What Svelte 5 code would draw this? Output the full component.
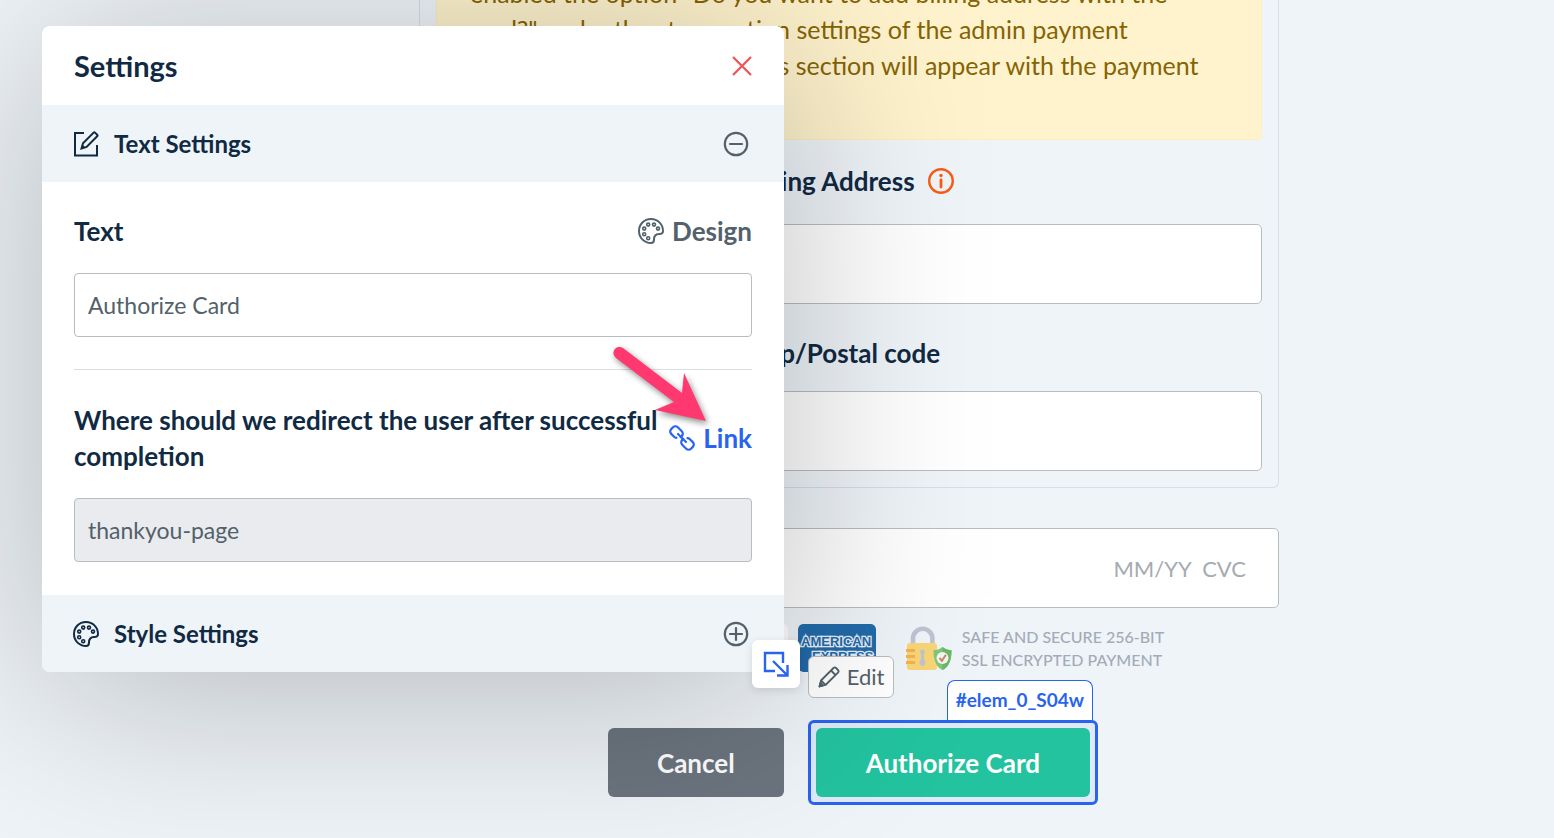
<script lang="ts">
  let buttonText = $state("Authorize Card");
  let redirectPage = $state("thankyou-page");
  let address = $state("");
  let postalCode = $state("");

  const cards = ["VISA", "MASTER", "DISCOVER"];
</script>

{#snippet palette()}
  <svg class="icon" viewBox="0 0 26 26" fill="none" stroke="currentColor" stroke-width="2" aria-hidden="true">
    <path d="M13 1C6 1 1 6.300 1 13c0 7 5.500 12 12 12 2.200 0 3-1.300 3-3.500 0-4 1.500-5.500 5-5.500 2.500 0 4-.8 4-3C25 6 19.500 1 13 1Z" />
    <g stroke-width="1.600">
      <circle cx="10.200" cy="6.600" r="1.500" />
      <circle cx="16" cy="6.600" r="1.500" />
      <circle cx="20" cy="10.600" r="1.500" />
      <circle cx="6.200" cy="10.600" r="1.500" />
      <circle cx="6.200" cy="16.200" r="1.500" />
      <circle cx="10.200" cy="20.200" r="1.500" />
    </g>
  </svg>
{/snippet}

<main class="page">
  <form class="checkout" onsubmit={(e) => e.preventDefault()}>
    <div class="address">
      <p class="alert">
        enabled the option "Do you want to add billing address with the<br />
        card?" under the store option settings of the admin payment<br />
        methods. When enabled, this section will appear with the payment<br />
        form.
      </p>
      <div class="field lead">
        <label for="address">
          Billing Address
          <svg class="info" viewBox="0 0 26 26" fill="none" stroke="currentColor" stroke-width="2.400" aria-hidden="true">
            <circle cx="13" cy="13" r="11.800" />
            <path d="M13 12v7" stroke-width="2.800" stroke-linecap="round" />
            <circle cx="13" cy="7.500" r="1.700" fill="currentColor" stroke="none" />
          </svg>
        </label>
        <input id="address" bind:value={address} />
      </div>
      <div class="field">
        <label for="postal">Zip/Postal code</label>
        <input id="postal" bind:value={postalCode} />
      </div>
    </div>

    <input class="card-number" aria-label="Card details" placeholder="MM/YY  CVC" />

    <div class="trust">
      {#each cards as card}
        <span class="brand">{card}</span>
      {/each}
      <svg class="amex" viewBox="0 0 78 48" role="img" aria-label="American Express">
        <rect width="78" height="48" rx="5" fill="#226bab" />
        <g font-family="Liberation Sans, sans-serif" font-size="13" font-weight="700" fill="#226bab" stroke="#e8eef4" stroke-width="2.600" paint-order="stroke">
          <text x="3" y="22">AMERICAN</text>
          <text x="14" y="37">EXPRESS</text>
        </g>
      </svg>
      <svg class="lock" viewBox="0 0 46 48" aria-hidden="true">
        <path d="M7 22V14.500a9.700 9.700 0 0 1 19.400 0V22" fill="none" stroke="#bfc4d2" stroke-width="4.600" />
        <rect x="1" y="19" width="30" height="27" rx="3" fill="#f7d577" />
        <path d="M0 25h9v3H0zM0 31h9v3H0zM0 37h9v3H0z" fill="#f6b04e" />
        <circle cx="16.500" cy="28" r="2.400" fill="#bfc4d2" />
        <path d="M15 28h3v7l1.400 3a3 3 0 1 1-5.800 0L15 35z" fill="#bfc4d2" />
        <path d="M36.500 23c3 2.300 6 3.200 9 3.300C45.500 36 43 43 36.500 46 30 43 27.500 36 27.500 26.300c3-.1 6-1 9-3.300Z" fill="#7fc779" />
        <path d="M36.500 23c3 2.300 6 3.200 9 3.300C45.500 36 43 43 36.500 46Z" fill="#6bb767" />
        <circle cx="36.500" cy="34" r="6" fill="#f4f6f5" />
        <path d="m33.500 34 2.400 2.800 4-6" fill="none" stroke="#c98b62" stroke-width="2" />
      </svg>
      <p class="secure">SAFE AND SECURE 256-BIT<br />SSL ENCRYPTED PAYMENT</p>
    </div>

    <div class="actions">
      <button class="btn cancel" type="button">Cancel</button>
      <div class="selected">
        <button class="edit" type="button">
          <svg viewBox="0 0 22 22" fill="none" stroke="currentColor" stroke-width="1.800" stroke-linejoin="round" aria-hidden="true">
            <path d="M1.500 20.500 3 14.500 15.500 2a1.800 1.800 0 0 1 2.500 0l2 2a1.800 1.800 0 0 1 0 2.500L7.500 19l-6 1.500Z" />
            <path d="m13 4.500 4.500 4.500M3 14.500 7.500 19" />
            <path d="m1.500 20.500 1-3.500 2.500 2.500Z" fill="currentColor" />
          </svg>
          Edit
        </button>
        <span class="tag">#elem_0_S04w</span>
        <button class="btn authorize" type="submit">{buttonText}</button>
      </div>
    </div>
  </form>

  <section class="settings" aria-label="Settings">
    <header>
      <h2>Settings</h2>
      <button class="plain close" type="button" aria-label="Close">
        <svg viewBox="0 0 20 20" stroke="currentColor" stroke-width="2.200" aria-hidden="true">
          <path d="m1 1 18 18M19 1 1 19" />
        </svg>
      </button>
    </header>

    <button class="plain section" type="button" aria-expanded="true">
      <svg class="icon" viewBox="0 0 26 26" fill="none" stroke="currentColor" stroke-width="2" aria-hidden="true">
        <path d="M11 2H2v22.500h22V14" />
        <path d="M8.500 17.500 10 12.300 20.600 1.600a1 1 0 0 1 1.400 0l2.200 2.200a1 1 0 0 1 0 1.400L13.600 15.900l-5.100 1.600Z" />
        <path d="m8 18 1.400-4.500 3 3Z" fill="currentColor" stroke="none" />
      </svg>
      <span>Text Settings</span>
      <svg class="toggle" viewBox="0 0 26 26" fill="none" stroke="currentColor" stroke-width="2.200" aria-hidden="true">
        <circle cx="13" cy="13" r="11.200" />
        <path d="M7 13h12" stroke-linecap="round" />
      </svg>
    </button>

    <div class="body">
      <div class="row">
        <label for="button-text">Text</label>
        <button class="plain tool" type="button">{@render palette()} Design</button>
      </div>
      <input id="button-text" bind:value={buttonText} />
      <hr />
      <div class="row">
        <label for="redirect">Where should we redirect the user after successful completion</label>
        <a class="tool link" href="#redirect">
          <svg class="icon" viewBox="0 0 26 26" fill="none" stroke="currentColor" stroke-width="2.200" stroke-linecap="round" aria-hidden="true">
            <path d="M7.500 12.800a3.400 3.400 0 0 1-2.400-1L2.200 8.900a3.400 3.400 0 0 1 0-4.800L4 2.300a3.400 3.400 0 0 1 4.800 0l4 4a3.400 3.400 0 0 1 0 4.800l-1 1" />
            <path d="m9 9 8 8" />
            <path d="M18.500 13.200a3.400 3.400 0 0 1 2.400 1l2.900 2.900a3.400 3.400 0 0 1 0 4.800L22 23.700a3.400 3.400 0 0 1-4.800 0l-4-4a3.400 3.400 0 0 1 0-4.800l1-1" />
          </svg>
          Link
        </a>
      </div>
      <input id="redirect" class="readonly" readonly bind:value={redirectPage} />
    </div>

    <button class="plain section" type="button" aria-expanded="false">
      {@render palette()}
      <span>Style Settings</span>
      <svg class="toggle" viewBox="0 0 26 26" fill="none" stroke="currentColor" stroke-width="2.200" aria-hidden="true">
        <circle cx="13" cy="13" r="11.200" />
        <path d="M7 13h12M13 7v12" stroke-linecap="round" />
      </svg>
    </button>

    <button class="resize" type="button" aria-label="Resize">
      <svg viewBox="0 0 26 26" fill="none" stroke="currentColor" stroke-width="2.400" aria-hidden="true">
        <path d="M12 20H2V2h18v10" />
        <path d="m10 10 14 14M14 24.500h10.500V14" />
      </svg>
    </button>

    <svg class="pointer" viewBox="0 0 100 84" aria-hidden="true">
      <path d="M4 13A6 6 0 0 1 11 3L70 48 72 28 94 76 43 65 62 57Z" fill="#ff3870" />
    </svg>
  </section>
</main>

<style>
  :global(body) {
    margin: 0;
    background: #eff4f9;
    color: #102a43;
    font-family: Lato, "Liberation Sans", sans-serif;
    font-size: 26px;
    line-height: 36px;
  }
  .page {
    position: relative;
    min-height: 100vh;
    box-sizing: border-box;
    padding: 0 275px 0 419px;
    overflow: hidden;
  }
  input,
  button {
    box-sizing: border-box;
    font: inherit;
    color: inherit;
  }
  button {
    cursor: pointer;
  }
  .checkout {
    margin-top: -25px;
  }
  .address {
    border: 1px solid #d7dee4;
    border-top: 0;
    border-radius: 0 0 6px 6px;
    padding: 0 16px 16px;
  }
  .alert {
    margin: 0 0 23px;
    padding: 0 33px 20px;
    border: 1px solid #ffeeba;
    border-top: 0;
    border-radius: 0 0 5px 5px;
    background: #fff3cd;
    color: #856404;
    font-size: 25px;
    white-space: nowrap;
  }
  .field {
    display: flex;
    flex-direction: column;
    gap: 20px;
  }
  .lead {
    gap: 25px;
  }
  .field + .field {
    margin-top: 31px;
  }
  .field label {
    display: flex;
    align-items: center;
    justify-content: center;
    gap: 13px;
    font-weight: 700;
  }
  .info {
    width: 26px;
    height: 26px;
    color: #fb5b13;
  }
  .field input,
  .card-number {
    width: 100%;
    height: 80px;
    padding: 0 32px;
    border: 1px solid #b8bdc2;
    border-radius: 5px;
    background: #fff;
  }
  .card-number {
    display: block;
    margin-top: 40px;
    text-align: right;
    font-size: 22px;
  }
  .card-number::placeholder {
    color: #a5abb1;
    opacity: 1;
    white-space: pre;
  }
  .trust {
    display: flex;
    justify-content: center;
    align-items: center;
    gap: 10px;
    margin-top: 16px;
  }
  .brand {
    width: 78px;
    height: 48px;
    border-radius: 5px;
    background: #fff;
    font-size: 14px;
    line-height: 48px;
    text-align: center;
  }
  .amex {
    width: 78px;
    height: 48px;
    border-radius: 5px;
  }
  .lock {
    width: 46px;
    height: 48px;
    margin-left: 20px;
  }
  .secure {
    margin: 0;
    color: #a3abb6;
    font-size: 16px;
    font-weight: 500;
    line-height: 23px;
  }
  .actions {
    display: flex;
    justify-content: center;
    gap: 24px;
    margin-top: 48px;
  }
  .btn {
    height: 69px;
    padding: 0 49px;
    border: 0;
    border-radius: 6px;
    color: #fff;
    font-weight: 700;
  }
  .cancel {
    margin: 8px 0;
    background: #6c757f;
  }
  .authorize {
    padding: 0 50px;
    background: #23c39f;
  }
  .selected {
    position: relative;
    margin-right: -8px;
    padding: 5px;
    border: 3px solid #2864ee;
    border-radius: 6px;
    background: #dfe9f8;
  }
  .edit {
    position: absolute;
    left: -3px;
    bottom: calc(100% + 25px);
    display: flex;
    align-items: center;
    gap: 7px;
    height: 42px;
    padding: 0 9px;
    border: 1px solid #b8bdc2;
    border-radius: 6px;
    background: #fff;
    color: #52616b;
    font-size: 22px;
  }
  .edit svg {
    width: 22px;
    height: 22px;
  }
  .tag {
    position: absolute;
    right: 2px;
    bottom: calc(100% + 3px);
    padding: 1px 8px 2px;
    border: 1px solid #2864ee;
    border-bottom: 0;
    border-radius: 8px 8px 0 0;
    background: #fff;
    color: #2864ee;
    font-size: 19px;
    font-weight: 700;
  }
  /* floating panel over the form */
  .settings {
    position: absolute;
    top: 26px;
    left: 42px;
    width: 742px;
    border-radius: 8px;
    background: #fff;
    box-shadow: 0 20px 200px rgba(0, 0, 0, 0.25);
  }
  .settings header {
    display: flex;
    align-items: center;
    justify-content: space-between;
    box-sizing: border-box;
    height: 79px;
    padding: 0 32px;
  }
  h2 {
    margin: 0;
    font-size: 29px;
  }
  .plain {
    border: 0;
    padding: 0;
    background: none;
  }
  .close {
    display: flex;
    color: #f05252;
  }
  .close svg {
    width: 20px;
    height: 20px;
  }
  .section {
    display: flex;
    align-items: center;
    gap: 15px;
    width: 100%;
    height: 77px;
    padding: 0 35px 0 31px;
    background: #eff4f9;
    font-size: 24px;
    font-weight: 700;
    text-align: left;
  }
  .body + .section {
    border-radius: 0 0 8px 8px;
  }
  .section span {
    flex: 1;
  }
  .icon,
  .toggle {
    flex: none;
    width: 26px;
    height: 26px;
  }
  .toggle {
    color: #52616b;
  }
  .body {
    padding: 31px 32px 33px;
  }
  .row {
    display: flex;
    align-items: center;
    justify-content: space-between;
    margin-bottom: 24px;
  }
  .row label {
    font-weight: 700;
  }
  .tool {
    display: flex;
    align-items: center;
    gap: 8px;
    color: #52616b;
    font-weight: 700;
  }
  .link {
    color: #2864ee;
    text-decoration: none;
  }
  .body input {
    display: block;
    width: 100%;
    height: 64px;
    padding: 0 13px;
    border: 1px solid #b8bdc2;
    border-radius: 4px;
    color: #52616b;
    font-size: 23px;
  }
  .body .readonly {
    background: #e9ebef;
  }
  hr {
    height: 1px;
    margin: 32px 0;
    border: 0;
    background: #dcdfe2;
  }
  .resize {
    position: absolute;
    right: -16px;
    bottom: -16px;
    display: flex;
    align-items: center;
    justify-content: center;
    width: 48px;
    height: 48px;
    border: 0;
    border-radius: 6px;
    background: #fff;
    color: #2864ee;
    box-shadow: 0 2px 8px rgba(0, 0, 0, 0.12);
  }
  .resize svg {
    width: 26px;
    height: 26px;
  }
  .pointer {
    position: absolute;
    top: 319px;
    left: 570px;
    width: 100px;
    height: 84px;
    overflow: visible;
    filter: drop-shadow(2px 3px 3px rgba(0, 0, 0, 0.45));
    pointer-events: none;
  }
</style>
